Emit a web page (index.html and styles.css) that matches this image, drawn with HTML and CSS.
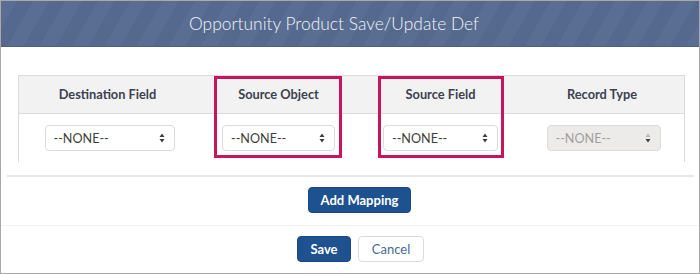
FILE: index.html
```html
<!DOCTYPE html>
<html>
<head>
<meta charset="utf-8">
<link rel="stylesheet" href="styles.css">
</head>
<body>
<div class="frame">
  <div class="header"><h1 class="title">Opportunity Product Save/Update Def</h1></div>
  <div class="content">
    <div class="table">
      <div class="col col-dest">
        <div class="th">Destination Field</div>
        <div class="td">
          <div class="select w-dest"><span>--NONE--</span>
            <svg class="arrows" width="6" height="10" viewBox="0 0 6 10"><path d="M3 0.5 L5.5 4 L0.5 4 Z" fill="#3e3e3c"/><path d="M0.5 6 L5.5 6 L3 9.5 Z" fill="#3e3e3c"/></svg>
          </div>
        </div>
      </div>
      <div class="col col-so">
        <div class="th">Source Object</div>
        <div class="td">
          <div class="select w-so"><span>--NONE--</span>
            <svg class="arrows" width="6" height="10" viewBox="0 0 6 10"><path d="M3 0.5 L5.5 4 L0.5 4 Z" fill="#3e3e3c"/><path d="M0.5 6 L5.5 6 L3 9.5 Z" fill="#3e3e3c"/></svg>
          </div>
        </div>
        <div class="highlight hl-so"></div>
      </div>
      <div class="col col-sf">
        <div class="th">Source Field</div>
        <div class="td">
          <div class="select w-sf"><span>--NONE--</span>
            <svg class="arrows" width="6" height="10" viewBox="0 0 6 10"><path d="M3 0.5 L5.5 4 L0.5 4 Z" fill="#3e3e3c"/><path d="M0.5 6 L5.5 6 L3 9.5 Z" fill="#3e3e3c"/></svg>
          </div>
        </div>
        <div class="highlight hl-sf"></div>
      </div>
      <div class="col col-rt">
        <div class="th">Record Type</div>
        <div class="td">
          <div class="select w-rt disabled"><span>--NONE--</span>
            <svg class="arrows" width="6" height="10" viewBox="0 0 6 10"><path d="M3 0.5 L5.5 4 L0.5 4 Z" fill="#b8b6b4"/><path d="M0.5 6 L5.5 6 L3 9.5 Z" fill="#3e3e3c"/></svg>
          </div>
        </div>
      </div>
    </div>
    <div class="separator"></div>
    <div class="add-row"><button class="btn btn-brand btn-add">Add Mapping</button></div>
  </div>
  <div class="footer">
    <button class="btn btn-brand btn-save">Save</button>
    <button class="btn btn-neutral btn-cancel">Cancel</button>
  </div>
</div>
</body>
</html>
```

FILE: styles.css
```css
* { box-sizing: border-box; }
html, body { margin: 0; padding: 0; background: #ffffff; }
body { font-family: "Lato", "Open Sans", sans-serif; }

.frame {
  width: 700px;
  height: 274px;
  border: 1px solid #a9a9a9;
  overflow: hidden;
  display: flex;
  flex-direction: column;
  background: #ffffff;
}

.header {
  height: 46px;
  flex: none;
  background-color: #566b90;
  background-image: repeating-linear-gradient(120deg, rgba(255,255,255,0.018) 0px, rgba(255,255,255,0.018) 14px, rgba(0,0,0,0.018) 14px, rgba(0,0,0,0.018) 28px);
  border-bottom: 1px solid #4d6184;
  display: flex;
  align-items: center;
  justify-content: center;
  padding-right: 32px;
}
.title {
  margin: 0;
  font-size: 17.4px;
  font-weight: 300;
  color: #f2f4f8;
}

.content {
  padding-top: 28px;
}

.table {
  margin-left: 17px;
  width: 667px;
  display: flex;
  border: 1px solid #dddbda;
  border-bottom: none;
}
.col {
  position: relative;
  display: flex;
  flex-direction: column;
}
.col-dest { width: 177px; }
.col-so { width: 165px; }
.col-sf { width: 159px; }
.col-rt { width: 164px; }

.th {
  height: 38px;
  background: #f3f2f2;
  border-bottom: 1px solid #dddbda;
  display: flex;
  align-items: center;
  justify-content: center;
  padding-bottom: 2px;
  font-size: 12.8px;
  font-weight: 700;
  color: #3b4150;
}
.td {
  height: 48px;
  display: flex;
  align-items: center;
  justify-content: center;
}

.select {
  height: 26px;
  border: 1px solid #dddbda;
  border-radius: 4px;
  background: #ffffff;
  display: flex;
  align-items: center;
  justify-content: space-between;
  padding: 0 9px 0 8px;
  font-size: 12.6px;
  color: #3e3e3c;
}
.select.disabled {
  background: #ecebea;
  color: #a09e9c;
}
.w-dest { width: 130px; margin-left: 4px; }
.w-so { width: 113px; }
.w-sf { width: 115px; }
.w-rt { width: 114px; margin-left: 3px; }
.arrows { display: block; }

.highlight {
  position: absolute;
  top: 0;
  height: 82px;
  border: 3px solid #c8145c;
  pointer-events: none;
}
.hl-so { left: 18px; width: 128px; }
.hl-sf { left: 17px; width: 126px; }

.separator {
  margin: 13px 5px 0 6px;
  height: 2px;
  background: #e6e6e6;
}

.add-row {
  display: flex;
  justify-content: center;
  padding: 10px 0 12px 19px;
  border-bottom: 1px solid #f3f3f3;
}

.btn {
  font-family: "Lato", "Open Sans", sans-serif;
  height: 26px;
  border-radius: 4px;
  font-size: 13px;
  padding: 0;
  cursor: pointer;
}
.btn-brand {
  background: #1d5190;
  border: 1px solid #1a4a86;
  color: #ffffff;
  font-weight: 700;
}
.btn-add { width: 103px; }
.btn-save { width: 54px; }
.btn-neutral {
  background: #ffffff;
  border: 1px solid #dddbda;
  color: #4d6a94;
  font-weight: 400;
}
.btn-cancel { width: 66px; }

.footer {
  flex: 1;
  display: flex;
  justify-content: center;
  align-items: flex-start;
  gap: 7px;
  padding-top: 10px;
  padding-left: 21px;
  background: #ffffff;
}
```
